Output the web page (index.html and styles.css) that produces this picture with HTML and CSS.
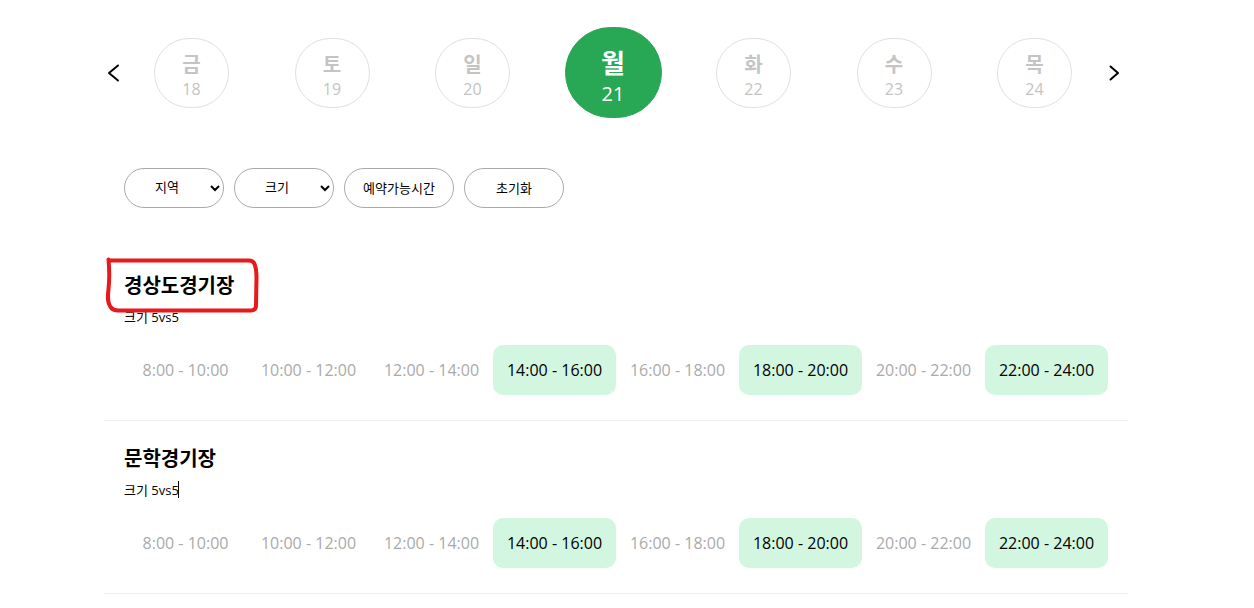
FILE: index.html
```html
<!DOCTYPE html>
<html lang="ko">
<head>
<meta charset="utf-8">
<title>경기장 예약</title>
<link rel="stylesheet" href="styles.css">
</head>
<body>
<main class="page">
  <nav class="week" aria-label="날짜 선택">
    <button class="arrow" type="button" aria-label="이전">
      <svg width="20" height="20" viewBox="0 0 20 20"><path d="M14 2.500 5 10l9 7.500"/></svg>
    </button>
    <div class="days">
      <button class="day" type="button"><strong class="weekday">금</strong><span class="date">18</span></button>
      <button class="day" type="button"><strong class="weekday">토</strong><span class="date">19</span></button>
      <button class="day" type="button"><strong class="weekday">일</strong><span class="date">20</span></button>
      <button class="day day-active" type="button"><strong class="weekday">월</strong><span class="date">21</span></button>
      <button class="day" type="button"><strong class="weekday">화</strong><span class="date">22</span></button>
      <button class="day" type="button"><strong class="weekday">수</strong><span class="date">23</span></button>
      <button class="day" type="button"><strong class="weekday">목</strong><span class="date">24</span></button>
    </div>
    <button class="arrow" type="button" aria-label="다음">
      <svg width="20" height="20" viewBox="0 0 20 20"><path d="M8.500 3.500 16 10l-7.500 6.500"/></svg>
    </button>
  </nav>

  <div class="filters">
    <select class="filter filter-select" aria-label="지역"><option>지역</option></select>
    <select class="filter filter-select" aria-label="크기"><option>크기</option></select>
    <button class="filter filter-wide" type="button">예약가능시간</button>
    <button class="filter" type="button">초기화</button>
  </div>

  <section class="court">
    <h2 class="court-name">경상도경기장</h2>
    <p class="court-size">크기 5vs5</p>
    <div class="slots">
      <button class="slot" type="button" disabled>8:00 - 10:00</button>
      <button class="slot" type="button" disabled>10:00 - 12:00</button>
      <button class="slot" type="button" disabled>12:00 - 14:00</button>
      <button class="slot slot-open" type="button">14:00 - 16:00</button>
      <button class="slot" type="button" disabled>16:00 - 18:00</button>
      <button class="slot slot-open" type="button">18:00 - 20:00</button>
      <button class="slot" type="button" disabled>20:00 - 22:00</button>
      <button class="slot slot-open" type="button">22:00 - 24:00</button>
    </div>
    <svg class="marker" width="156" height="58" viewBox="0 0 156 58" aria-hidden="true">
      <path d="M5.500 3.500C6.500 14 6.500 24 5.500 33C4.500 42 4.500 47 7.500 51Q10 54.500 15 54.500L148 54.500Q153 54.500 153 49L153.500 21Q153.500 13 151.500 8Q150 4.500 146 4.500L6 4.500"/>
    </svg>
  </section>

  <section class="court">
    <h2 class="court-name">문학경기장</h2>
    <p class="court-size"><span class="caret">크기 5vs5</span></p>
    <div class="slots">
      <button class="slot" type="button" disabled>8:00 - 10:00</button>
      <button class="slot" type="button" disabled>10:00 - 12:00</button>
      <button class="slot" type="button" disabled>12:00 - 14:00</button>
      <button class="slot slot-open" type="button">14:00 - 16:00</button>
      <button class="slot" type="button" disabled>16:00 - 18:00</button>
      <button class="slot slot-open" type="button">18:00 - 20:00</button>
      <button class="slot" type="button" disabled>20:00 - 22:00</button>
      <button class="slot slot-open" type="button">22:00 - 24:00</button>
    </div>
  </section>
</main>
</body>
</html>
```
FILE: styles.css
```css
* {
  box-sizing: border-box;
}

body {
  margin: 0;
  padding: 27px 22px 0 0;
  background: #fff;
  color: #000;
}

body,
button,
select {
  font-family: "Open Sans", "Noto Sans CJK KR", sans-serif;
}

.page {
  max-width: 1024px;
  margin: 0 auto;
}

.week {
  display: flex;
  align-items: center;
  justify-content: space-between;
  gap: 30px;
  padding-right: 6px;
}

.arrow {
  display: flex;
  padding: 0;
  border: 0;
  background: none;
}

.arrow svg {
  fill: none;
  stroke: #000;
  stroke-width: 2;
  stroke-linecap: round;
  stroke-linejoin: round;
}

.days {
  display: flex;
  flex: 1;
  align-items: center;
  justify-content: space-between;
}

.day {
  display: flex;
  flex-direction: column;
  align-items: center;
  justify-content: center;
  width: 75px;
  height: 70px;
  padding: 6px 0 0;
  border: 1px solid #e0e0e0;
  border-radius: 35px;
  background: #fff;
  color: #c4c4c4;
}

.weekday {
  font-size: 20px;
  line-height: 26px;
}

.date {
  font-size: 16px;
  line-height: 22px;
}

.day-active {
  width: 97px;
  height: 91px;
  margin: 0 -11px;
  padding: 8px 0 0;
  border-color: #28a754;
  border-radius: 46px;
  background: #28a754;
  color: #fff;
}

.day-active .weekday {
  font-size: 26px;
  line-height: 34px;
}

.day-active .date {
  font-size: 20px;
  line-height: 28px;
}

.filters {
  display: flex;
  gap: 10px;
  padding: 50px 20px 40px;
}

.filter {
  width: 100px;
  height: 40px;
  padding: 0 0 2px;
  border: 1px solid #aaa;
  border-radius: 20px;
  background-color: #fff;
  color: #000;
  font-size: 13px;
}

.filter-select {
  padding-left: 26px;
}

.filter-wide {
  width: 110px;
}

.court {
  position: relative;
  padding: 23px 20px 25px;
  border-bottom: 1px solid #eee;
}

.court-name {
  margin: 0 0 6px;
  font-size: 20px;
  line-height: 30px;
}

.court-size {
  margin: 0 0 18px;
  font-size: 13px;
  line-height: 20px;
}

.caret {
  position: relative;
}

.caret::after {
  content: "";
  position: absolute;
  top: 0;
  right: 0;
  width: 1px;
  height: 17px;
  background: #000;
}

.slots {
  display: grid;
  grid-template-columns: repeat(8, 1fr);
}

.slot {
  height: 50px;
  padding: 0;
  border: 0;
  border-radius: 10px;
  background: none;
  color: #aaa;
  font-size: 16px;
  white-space: nowrap;
}

.slot-open {
  background: #d3f6e1;
  color: #000;
}

.marker {
  position: absolute;
  top: 8px;
  left: -1px;
  fill: none;
  stroke: #e8191c;
  stroke-width: 4;
  stroke-linecap: round;
  stroke-linejoin: round;
  overflow: visible;
}
```
